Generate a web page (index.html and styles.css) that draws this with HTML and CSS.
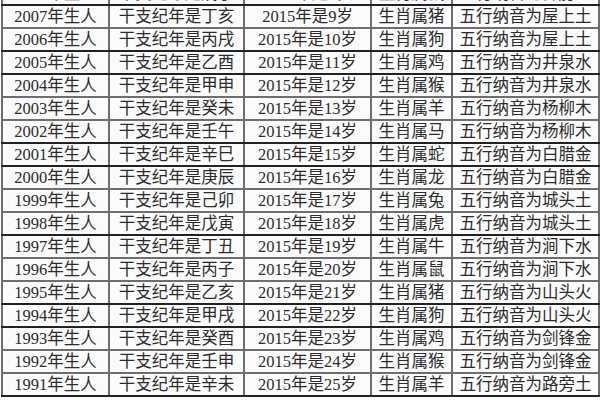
FILE: index.html
```html
<!DOCTYPE html>
<html lang="zh">
<head>
<meta charset="utf-8">
<link rel="stylesheet" href="styles.css">
</head>
<body>
<div class="sheet">
<table class="zodiac">
<colgroup><col class="c1"><col class="c2"><col class="c3"><col class="c4"><col class="c5"></colgroup>
<tbody>
<tr class="dk"><td>2008年生人</td><td>干支纪年是戊子</td><td>2015年是8岁</td><td>生肖属鼠</td><td>五行纳音为霹雳火</td></tr>
<tr><td>2007年生人</td><td>干支纪年是丁亥</td><td>2015年是9岁</td><td>生肖属猪</td><td>五行纳音为屋上土</td></tr>
<tr class="dk"><td>2006年生人</td><td>干支纪年是丙戌</td><td>2015年是10岁</td><td>生肖属狗</td><td>五行纳音为屋上土</td></tr>
<tr class="dk"><td>2005年生人</td><td>干支纪年是乙酉</td><td>2015年是11岁</td><td>生肖属鸡</td><td>五行纳音为井泉水</td></tr>
<tr><td>2004年生人</td><td>干支纪年是甲申</td><td>2015年是12岁</td><td>生肖属猴</td><td>五行纳音为井泉水</td></tr>
<tr><td>2003年生人</td><td>干支纪年是癸未</td><td>2015年是13岁</td><td>生肖属羊</td><td>五行纳音为杨柳木</td></tr>
<tr class="dk"><td>2002年生人</td><td>干支纪年是壬午</td><td>2015年是14岁</td><td>生肖属马</td><td>五行纳音为杨柳木</td></tr>
<tr class="dk"><td>2001年生人</td><td>干支纪年是辛巳</td><td>2015年是15岁</td><td>生肖属蛇</td><td>五行纳音为白腊金</td></tr>
<tr><td>2000年生人</td><td>干支纪年是庚辰</td><td>2015年是16岁</td><td>生肖属龙</td><td>五行纳音为白腊金</td></tr>
<tr><td>1999年生人</td><td>干支纪年是己卯</td><td>2015年是17岁</td><td>生肖属兔</td><td>五行纳音为城头土</td></tr>
<tr class="dk"><td>1998年生人</td><td>干支纪年是戊寅</td><td>2015年是18岁</td><td>生肖属虎</td><td>五行纳音为城头土</td></tr>
<tr><td>1997年生人</td><td>干支纪年是丁丑</td><td>2015年是19岁</td><td>生肖属牛</td><td>五行纳音为涧下水</td></tr>
<tr><td>1996年生人</td><td>干支纪年是丙子</td><td>2015年是20岁</td><td>生肖属鼠</td><td>五行纳音为涧下水</td></tr>
<tr class="dk"><td>1995年生人</td><td>干支纪年是乙亥</td><td>2015年是21岁</td><td>生肖属猪</td><td>五行纳音为山头火</td></tr>
<tr class="dk"><td>1994年生人</td><td>干支纪年是甲戌</td><td>2015年是22岁</td><td>生肖属狗</td><td>五行纳音为山头火</td></tr>
<tr><td>1993年生人</td><td>干支纪年是癸酉</td><td>2015年是23岁</td><td>生肖属鸡</td><td>五行纳音为剑锋金</td></tr>
<tr><td>1992年生人</td><td>干支纪年是壬申</td><td>2015年是24岁</td><td>生肖属猴</td><td>五行纳音为剑锋金</td></tr>
<tr class="dk"><td>1991年生人</td><td>干支纪年是辛未</td><td>2015年是25岁</td><td>生肖属羊</td><td>五行纳音为路旁土</td></tr>
</tbody>
</table>
</div>
</body>
</html>
```
FILE: styles.css
```css
html, body {
  margin: 0;
  padding: 0;
  background: #fbfbfb;
}
.sheet {
  width: 600px;
  height: 400px;
  overflow: hidden;
}
.zodiac {
  margin: -19px 0 0 1px;
  width: 597px;
  table-layout: fixed;
  border-collapse: collapse;
  font-family: "Liberation Serif", "Noto Sans CJK SC", serif;
  font-size: 16.5px;
  color: #2b2b2b;
}
.c1 { width: 107px; }
.c2 { width: 135px; }
.c3 { width: 127px; }
.c4 { width: 81px; }
.c5 { width: 147px; }
.zodiac tr {
  height: 22.95px;
}
.zodiac td {
  padding: 1px 0 0;
  height: 19.95px;
  line-height: 20px;
  text-align: center;
  white-space: nowrap;
  overflow: hidden;
  border: 2px solid #6e6e6e;
}
.zodiac tr.dk td {
  border-bottom-color: #222;
}
```
